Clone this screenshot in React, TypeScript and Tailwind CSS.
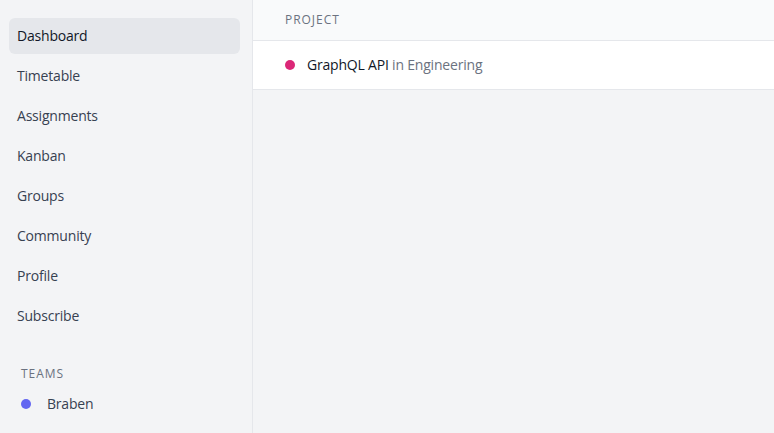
import React from "react";

const navItems = [
  "Dashboard",
  "Timetable",
  "Assignments",
  "Kanban",
  "Groups",
  "Community",
  "Profile",
  "Subscribe",
];

export default function App() {
  const [active, setActive] = React.useState("Dashboard");

  return (
    <div
      className="flex h-[433px] w-full bg-[#f3f4f6] text-[#111827]"
      style={{ fontFamily: "'Open Sans', 'Noto Sans', sans-serif" }}
    >
      <aside className="flex w-[253px] shrink-0 flex-col border-r border-[#e5e7eb] px-[9px] pt-[18px]">
        <nav className="flex flex-col gap-1">
          {navItems.map((item) => (
            <button
              key={item}
              onClick={() => setActive(item)}
              className={
                item === active
                  ? "flex h-9 w-[231px] items-center rounded-md bg-[#e5e7eb] px-2 pb-px text-left text-sm tracking-[-0.2px] text-[#111827]"
                  : "flex h-9 w-[231px] items-center rounded-md px-2 pb-px text-left text-sm tracking-[-0.2px] text-[#374151]"
              }
            >
              {item}
            </button>
          ))}
        </nav>
        <div className="mt-[32px] px-3">
          <h3 className="text-xs font-medium uppercase tracking-[0.08em] text-[#6b7280]">
            Teams
          </h3>
          <div className="mt-[12px] flex items-center gap-4 text-sm tracking-[-0.2px] text-[#374151]">
            <span className="h-2.5 w-2.5 rounded-full bg-[#6366f1]" />
            <span>Braben</span>
          </div>
        </div>
      </aside>

      <main className="flex-1">
        <div className="flex h-[41px] items-center border-b border-[#e5e7eb] bg-[#f9fafb] px-8">
          <span className="text-xs font-medium uppercase tracking-[0.08em] text-[#6b7280]">
            Project
          </span>
        </div>
        <div className="flex h-[49px] items-center gap-3 border-b border-[#e5e7eb] bg-white px-8 pb-px text-sm tracking-[-0.2px]">
          <span className="h-2.5 w-2.5 rounded-full bg-[#db2777]" />
          <span>
            GraphQL API <span className="text-[#6b7280]">in Engineering</span>
          </span>
        </div>
      </main>
    </div>
  );
}
